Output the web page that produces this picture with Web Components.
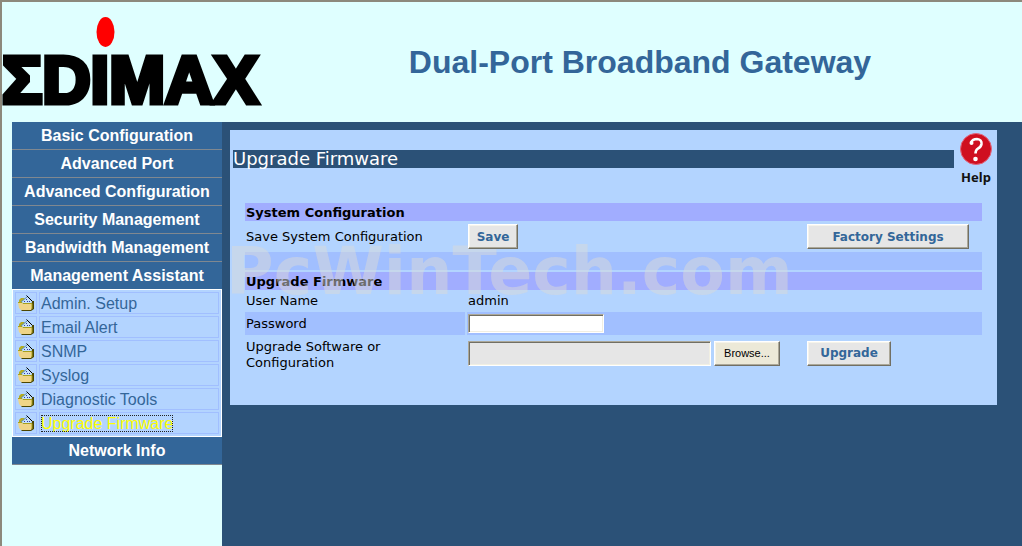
<!DOCTYPE html>
<html lang="en">
<head>
<meta charset="utf-8">
<title>Dual-Port Broadband Gateway</title>
<style>
  html { height: 100%; }
  body { margin: 0; min-height: 100%; display: flex; box-sizing: border-box; font-family: "Liberation Sans", Arial, sans-serif; background: #dfffff; border: solid; border-width: 2px 0 0 2px; border-color: #8c897c; }
</style>
</head>
<body>
<gateway-page>
  <brand-logo slot="header"></brand-logo>
  <page-title slot="header">Dual-Port Broadband Gateway</page-title>
  <side-menu slot="menu">
    <menu-item>Basic Configuration</menu-item>
    <menu-item>Advanced Port</menu-item>
    <menu-item>Advanced Configuration</menu-item>
    <menu-item>Security Management</menu-item>
    <menu-item>Bandwidth Management</menu-item>
    <menu-item class="open">Management Assistant</menu-item>
    <sub-menu>
      <sub-item>Admin. Setup</sub-item>
      <sub-item>Email Alert</sub-item>
      <sub-item>SNMP</sub-item>
      <sub-item>Syslog</sub-item>
      <sub-item>Diagnostic Tools</sub-item>
      <sub-item selected>Upgrade Firmware</sub-item>
    </sub-menu>
    <menu-item>Network Info</menu-item>
  </side-menu>
  <firmware-panel></firmware-panel>
</gateway-page>

<script>
const define = (name, html) => customElements.define(name, class extends HTMLElement {
  constructor() {
    super();
    this.attachShadow({ mode: 'open' }).innerHTML = html;
  }
});

define('gateway-page', `
<style>
  :host { flex: 1; display: grid; grid-template: 120px 1fr / 220px 1fr; }
  header { grid-column: 1 / -1; display: grid; grid-template-columns: 256px 1fr; }
  nav { padding-left: 10px; }
  main { background: #2b5177; padding: 8px 25px 8px 8px; }
</style>
<header><slot name="header"></slot></header>
<nav><slot name="menu"></slot></nav>
<main><slot></slot></main>`);

define('brand-logo', `
<style>
  :host { display: block; position: relative; }
  b { display: block; padding-top: 38px; font: bold 67px/80px "Liberation Sans", Arial, sans-serif; color: #000; white-space: nowrap; -webkit-text-stroke: 5px #000; }
  svg { position: absolute; left: 94px; top: 15px; }
</style>
<b>ΣDIMAX</b>
<svg width="19" height="30" aria-hidden="true"><ellipse cx="9.5" cy="15" rx="9" ry="15" fill="#f00"/></svg>`);

define('page-title', `
<style>
  :host { display: block; }
  h1 { margin: 0; padding-top: 40px; font-size: 32px; line-height: 40px; color: #336699; text-align: center; }
</style>
<h1><slot></slot></h1>`);

define('side-menu', `<style>:host { display: block; }</style><slot></slot>`);

define('menu-item', `
<style>
  :host { display: block; background: #336699; border-bottom: 1px solid #808890; }
  :host(.open) { border-bottom: 0; }
  a { display: block; text-align: center; font-weight: bold; font-size: 16px; line-height: 27px; color: #fff; text-decoration: none; }
</style>
<a href="#"><slot></slot></a>`);

define('sub-menu', `
<style>
  :host { display: grid; gap: 2px; padding: 2px; border: 1px solid #fff; background: #b3d4ff; }
</style>
<slot></slot>`);

define('sub-item', `
<style>
  :host { display: grid; grid-template-columns: 22px 1fr; gap: 2px; }
  span { box-sizing: border-box; height: 22px; border: 1px solid #a1bfff; padding: 1px; font-size: 16px; line-height: 20px; }
  svg { display: block; margin: 1px; }
  a { color: #336699; text-decoration: none; }
  :host([selected]) a { color: #ff0; outline: 1px dotted #222; outline-offset: -1px; }
</style>
<span><svg width="16" height="16" viewBox="0 0 16 16" aria-hidden="true">
  <path d="M1 8V5l2-2h3l1 1 2 3z" fill="#b3ab22"/>
  <path d="M2 8l7-6 5 5v3H3z" fill="#c4e2fb"/>
  <path d="M3 7l6-5" stroke="#5a8fb8" fill="none"/>
  <path d="M6 7l1-1M8 5l1-1M9 7l1-1M11 7l1-1" stroke="#3434a8" fill="none"/>
  <path d="M8.500 .5L15 7" fill="none" stroke="#000"/>
  <path d="M14 6h2v8l-3 2H4l-1-1h10z" fill="#4d4600"/>
  <path d="M0 8h4l1 1h9v4l-1 2H3L1 13z" fill="#efd588"/>
  <path d="M0 7.500h4l1 1h9V14" fill="none" stroke="#a8a01c"/>
</svg></span><span><a href="#"><slot></slot></a></span>`);

define('bevel-button', `
<style>
  :host { display: block; position: relative; z-index: 1; }
  button { box-sizing: border-box; width: 100%; height: 25px; margin: 0; padding: 0; display: block; background: #e6e6e6; border: solid; border-width: 1px; border-color: #fff #716f64 #716f64 #fff; box-shadow: inset -1px -1px #aca899, inset 1px 1px #f6f4ea; font: bold 12px/22px "DejaVu Sans", sans-serif; color: #336699; }
  :host(.plain) button { background: #ece9d8; color: #000; font: 11px/22px "Liberation Sans", sans-serif; }
</style>
<button type="button"><slot></slot></button>`);

define('help-link', `
<style>
  :host { display: block; }
  a { display: grid; justify-items: center; row-gap: 3px; font: bold 13px/16px "Noto Sans", sans-serif; color: #111; text-decoration: none; }
</style>
<a href="#"><svg width="34" height="34" viewBox="0 0 34 34" aria-hidden="true">
  <circle cx="17" cy="17" r="15.500" fill="#cf0f20" stroke="#e2647b"/>
  <path d="M12 10.500q1.500-3.500 6-3.500 5 .5 4.500 5-.5 3-3.500 4.500-2.500 1.500-2.500 5" fill="none" stroke="#fff" stroke-width="2.600"/>
  <circle cx="16.500" cy="27" r="2.300" fill="#fff"/><circle cx="12.500" cy="11" r="2" fill="#fff"/>
</svg>Help</a>`);

define('firmware-panel', `
<style>
  :host { display: block; position: relative; box-sizing: border-box; min-height: 275px; background: #b3d4ff; font: 13px/16px "DejaVu Sans", Verdana, sans-serif; color: #000; }
  .top { display: grid; grid-template-columns: 1fr 36px; gap: 4px; padding: 2px 3px 0; height: 71px; }
  h2 { margin: 18px 0 0; height: 18px; background: #2b5177; color: #fff; font-size: 18px; font-weight: normal; line-height: 18px; }
  form { margin: 0 15px; }
  h3 { margin: 0; padding: 1px 0 0 1px; background: #a1adff; font-size: 13px; line-height: 17px; }
  .row { display: grid; grid-template-columns: 220px 338px 1fr; column-gap: 2px; align-items: center; min-height: 22px; }
  .row > :first-child { padding-left: 1px; }
  .save { min-height: 31px; }
  .blank { height: 18px; margin-bottom: 2px; background: #a1bfff; }
  .pass { min-height: 23px; background: linear-gradient(#b3d4ff, #b3d4ff) 220px 0 / 2px 100% no-repeat #a1bfff; }
  .file { min-height: 36px; }
  .file label { padding-top: 4px; }
  .file .field { display: grid; grid-template-columns: 1fr 66px; gap: 3px; padding-right: 25px; }
  .field { padding-left: 1px; }
  input { box-sizing: border-box; display: block; width: 100%; height: 25px; margin: 0; padding: 0 2px; border: 1px solid; border-color: #aca899 #fff #fff #aca899; border-radius: 0; background: #e6e6e6; box-shadow: inset 1px 1px #716f64, inset -1px -1px #f1efe2; }
  #pw { width: 136px; height: 19px; background-color: #fff; }
  .w50 { width: 50px; } .w84 { width: 84px; } .w162 { width: 162px; }
  .mark { position: absolute; left: -4px; top: 109px; font: bold 65px/65px "DejaVu Sans", sans-serif; color: rgba(218, 218, 218, .5); pointer-events: none; }
</style>
<div class="top"><h2>Upgrade Firmware</h2><help-link></help-link></div>
<form>
  <h3>System Configuration</h3>
  <div class="row save"><span>Save System Configuration</span><div class="field"><bevel-button class="w50">Save</bevel-button></div><bevel-button class="w162">Factory Settings</bevel-button></div>
  <div class="blank"></div>
  <h3>Upgrade Firmware</h3>
  <div class="row"><span>User Name</span><span class="field">admin</span></div>
  <div class="row pass"><label for="pw">Password</label><div class="field"><input id="pw" type="password"></div></div>
  <div class="row file"><label for="file">Upgrade Software or<br>Configuration</label><div class="field"><input id="file" type="text" readonly><bevel-button class="plain">Browse...</bevel-button></div><bevel-button class="w84">Upgrade</bevel-button></div>
</form>
<div class="mark">PcWinTech.com</div>`);
</script>
</body>
</html>
